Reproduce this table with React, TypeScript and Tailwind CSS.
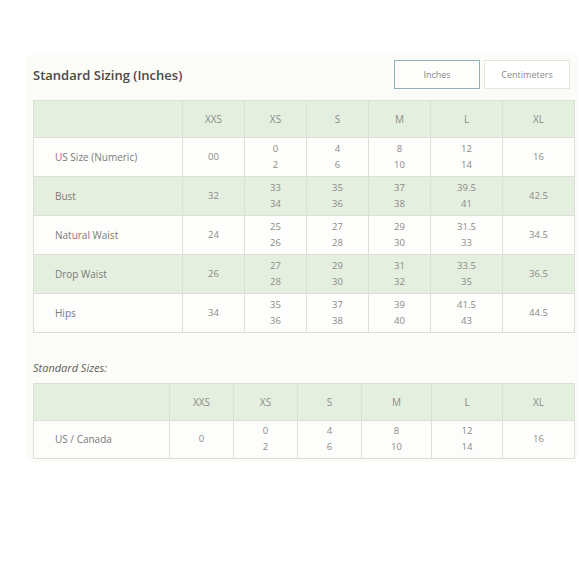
import React from "react";

type Cell = string | [string, string];

const sizes = ["XXS", "XS", "S", "M", "L", "XL"];

const inchRows: { label: string; cells: Cell[] }[] = [
  { label: "US Size (Numeric)", cells: ["00", ["0", "2"], ["4", "6"], ["8", "10"], ["12", "14"], "16"] },
  { label: "Bust", cells: ["32", ["33", "34"], ["35", "36"], ["37", "38"], ["39.5", "41"], "42.5"] },
  { label: "Natural Waist", cells: ["24", ["25", "26"], ["27", "28"], ["29", "30"], ["31.5", "33"], "34.5"] },
  { label: "Drop Waist", cells: ["26", ["27", "28"], ["29", "30"], ["31", "32"], ["33.5", "35"], "36.5"] },
  { label: "Hips", cells: ["34", ["35", "36"], ["37", "38"], ["39", "40"], ["41.5", "43"], "44.5"] },
];

const standardRows: { label: string; cells: Cell[] }[] = [
  { label: "US / Canada", cells: ["0", ["0", "2"], ["4", "6"], ["8", "10"], ["12", "14"], "16"] },
];

function CellValue({ value }: { value: Cell }) {
  if (typeof value === "string") return <span>{value}</span>;
  return (
    <div className="flex flex-col items-center leading-[16px]">
      <span>{value[0]}</span>
      <span>{value[1]}</span>
    </div>
  );
}

function SizeTable({
  rows,
  cols,
  headerH,
  rowH,
  striped,
}: {
  rows: { label: string; cells: Cell[] }[];
  cols: string;
  headerH: string;
  rowH: string;
  striped: boolean;
}) {
  return (
    <div className="border-l border-t border-[#dcdfd8] text-[9.5px] text-[#8b8b87]">
      <div className={`grid ${cols} ${headerH} bg-[#e5efe0]`}>
        <div className="border-b border-r border-[#dcdfd8]" />
        {sizes.map((s) => (
          <div key={s} className="flex items-center justify-center border-b border-r border-[#dcdfd8] pt-[1px] text-[10px]">
            {s}
          </div>
        ))}
      </div>
      {rows.map((row, i) => (
        <div
          key={row.label}
          className={`grid ${cols} ${rowH} ${striped && i % 2 === 1 ? "bg-[#e5efe0]" : "bg-[#fdfdfb]"}`}
        >
          <div className="flex items-center border-b border-r border-[#dcdfd8] pl-[21px] text-[10px] text-[#7b7b77]">
            {row.label}
          </div>
          {row.cells.map((c, j) => (
            <div key={j} className="flex items-center justify-center border-b border-r border-[#dcdfd8]">
              <CellValue value={c} />
            </div>
          ))}
        </div>
      ))}
    </div>
  );
}

export default function App() {
  return (
    <div className="min-h-[580px] w-[580px] bg-white pl-[27px] pt-[55px] font-['Open_Sans',sans-serif]">
      <div className="w-[550px] bg-[#fbfcf8] pb-[3px] pl-[6px] pt-[5px]">
        <div className="flex h-[29px] w-[542px] items-center justify-between pr-[5px]">
          <h2 className="pt-[2px] text-[13px] font-semibold text-[#4a4a48]">Standard Sizing (Inches)</h2>
          <div className="flex gap-[4px]">
            <button className="h-[29px] w-[86px] border border-[#8fb2b8] bg-[#fdfdfb] text-[9px] text-[#8a8a86]">
              Inches
            </button>
            <button className="h-[29px] w-[86px] border border-[#e3e5e0] bg-white text-[9px] text-[#8a8a86]">
              Centimeters
            </button>
          </div>
        </div>
        <div className="mt-[11px] w-[542px]">
          <SizeTable
            rows={inchRows}
            cols="grid-cols-[149px_62px_62px_62px_62px_72px_72px]"
            headerH="h-[37px]"
            rowH="h-[39px]"
            striped
          />
        </div>
        <p className="mt-[27px] text-[11px] italic text-[#5f5f5c]">Standard Sizes:</p>
        <div className="mt-[6px] w-[542px]">
          <SizeTable
            rows={standardRows}
            cols="grid-cols-[136px_64px_64px_64px_70px_71px_72px]"
            headerH="h-[37px]"
            rowH="h-[38px]"
            striped={false}
          />
        </div>
      </div>
    </div>
  );
}
